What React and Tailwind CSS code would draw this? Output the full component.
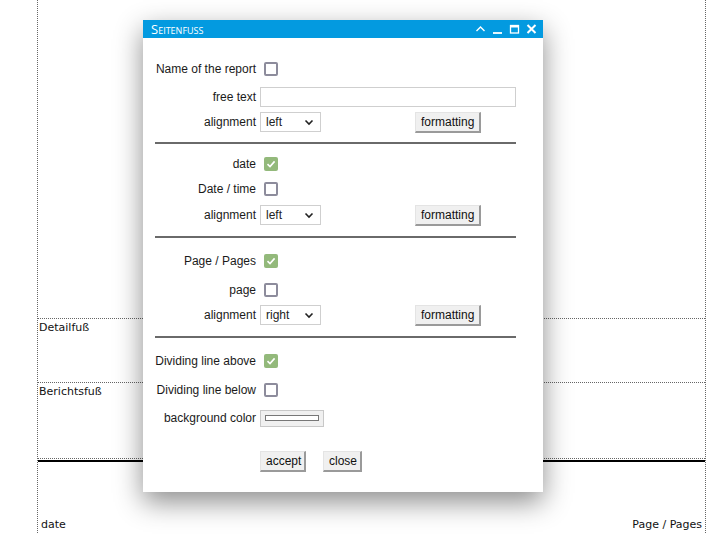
import { useState } from "react";

const font = { fontFamily: '"Liberation Sans", Arial, sans-serif' };

function CheckBox({ checked, onChange }) {
  return (
    <button
      type="button"
      onClick={onChange}
      className={
        "ml-[4px] w-[14px] h-[14px] rounded-[2px] flex items-center justify-center " +
        (checked ? "bg-[#93b97b]" : "bg-white border-2 border-[#8d8c9c]")
      }
    >
      {checked && (
        <svg width="10" height="10" viewBox="0 0 10 10">
          <path d="M1.5 5.2 L4 7.6 L8.6 2.4" fill="none" stroke="white" strokeWidth="1.6" />
        </svg>
      )}
    </button>
  );
}

function Select({ value }) {
  return (
    <div className="w-[61px] h-[20px] border border-[#cfcfcf] bg-white flex items-center justify-between pl-[5px] pr-[6px] text-[12px] text-[#222]">
      <span>{value}</span>
      <svg width="10" height="7" viewBox="0 0 10 7">
        <path d="M1.5 1.5 L5 5 L8.5 1.5" fill="none" stroke="#222" strokeWidth="1.6" />
      </svg>
    </div>
  );
}

function Btn({ children, className = "" }) {
  return (
    <button
      type="button"
      className={
        "h-[21px] bg-[#f0f0f0] border border-t-[#e4e4e4] border-l-[#e4e4e4] border-r-[#9a9a9a] border-b-[#9a9a9a] border-r-2 border-b-2 text-[12px] text-[#111] px-[5px] leading-none " +
        className
      }
    >
      {children}
    </button>
  );
}

function Row({ label, mt, children }) {
  return (
    <div className={"flex items-center h-6 " + mt}>
      <div className="w-[101px] text-right text-[12px] text-[#1a1a1a] whitespace-nowrap">{label}</div>
      <div className="ml-[4px] flex items-center flex-1">{children}</div>
    </div>
  );
}

function Hr({ mt }) {
  return <div className={"h-[2px] bg-[#6a6a6a] w-[361px] " + mt} />;
}

export default function App() {
  const [checks, setChecks] = useState({
    name: false,
    date: true,
    datetime: false,
    pages: true,
    page: false,
    above: true,
    below: false,
  });
  const toggle = (k) => setChecks({ ...checks, [k]: !checks[k] });

  return (
    <div className="relative w-[728px] h-[549px] bg-white overflow-hidden" style={font}>
      {/* report canvas */}
      <div
        className="ml-[37px] w-[669px] h-[533px] border-l border-r border-dotted border-[#666] flex flex-col"
        style={{ fontFamily: '"DejaVu Sans", sans-serif' }}
      >
        <div className="h-[318px]" />
        <div className="h-[64px] border-t border-dotted border-[#666] text-[11px] text-[#111] pl-[1px] pt-[1px]">
          Detailfuß
        </div>
        <div className="h-[76px] border-t border-dotted border-[#666] text-[11px] text-[#111] pl-[1px] pt-[1px]">
          Berichtsfuß
        </div>
        <div className="border-t border-dotted border-[#666] h-[2px]" />
        <div className="flex-1 border-t-2 border-black flex items-end justify-between text-[11px] text-[#111] px-[3px]">
          <span>date</span>
          <span>Page / Pages</span>
        </div>
      </div>

      {/* dialog window */}
      <div className="absolute left-[143px] top-[20px] w-[400px] h-[472px] bg-white shadow-[0_10px_26px_rgba(0,0,0,0.45)]">
        <div className="h-[18px] bg-[#039ae0] flex items-center justify-between pl-[8px] pr-[6px] text-white">
          <span
            className="text-[13px] leading-none"
            style={{ fontVariant: "small-caps", fontFamily: '"Open Sans", sans-serif' }}
          >
            Seitenfuss
          </span>
          <div className="flex items-center gap-[6px]">
            <svg width="11" height="10" viewBox="0 0 11 10">
              <path d="M1.5 7 L5.5 3 L9.5 7" fill="none" stroke="white" strokeWidth="1.4" />
            </svg>
            <svg width="11" height="10" viewBox="0 0 11 10">
              <path d="M1 9 H10" stroke="white" strokeWidth="1.8" />
            </svg>
            <svg width="11" height="10" viewBox="0 0 11 10">
              <rect x="1.5" y="1.5" width="8" height="7.5" fill="none" stroke="white" strokeWidth="1.3" />
              <path d="M1.5 2.5 H9.5" stroke="white" strokeWidth="2" />
            </svg>
            <svg width="11" height="10" viewBox="0 0 11 10">
              <path d="M1.5 1 L9.5 9 M9.5 1 L1.5 9" stroke="white" strokeWidth="2" />
            </svg>
          </div>
        </div>

        <div className="pl-[12px] flex flex-col">
          <Row label="Name of the report" mt="mt-[19px]">
            <CheckBox checked={checks.name} onChange={() => toggle("name")} />
          </Row>
          <Row label="free text" mt="mt-[4px]">
            <input className="w-[256px] h-[20px] border border-[#cfcfcf] outline-none text-[12px] px-1" />
          </Row>
          <Row label="alignment" mt="mt-[1px]">
            <Select value="left" />
            <Btn className="ml-[94px]">formatting</Btn>
          </Row>
          <Hr mt="mt-[8px]" />

          <Row label="date" mt="mt-[8px]">
            <CheckBox checked={checks.date} onChange={() => toggle("date")} />
          </Row>
          <Row label="Date / time" mt="mt-[1px]">
            <CheckBox checked={checks.datetime} onChange={() => toggle("datetime")} />
          </Row>
          <Row label="alignment" mt="mt-[2px]">
            <Select value="left" />
            <Btn className="ml-[94px]">formatting</Btn>
          </Row>
          <Hr mt="mt-[9px]" />

          <Row label="Page / Pages" mt="mt-[11px]">
            <CheckBox checked={checks.pages} onChange={() => toggle("pages")} />
          </Row>
          <Row label="page" mt="mt-[5px]">
            <CheckBox checked={checks.page} onChange={() => toggle("page")} />
          </Row>
          <Row label="alignment" mt="mt-[1px]">
            <Select value="right" />
            <Btn className="ml-[94px]">formatting</Btn>
          </Row>
          <Hr mt="mt-[9px]" />

          <Row label="Dividing line above" mt="mt-[11px]">
            <CheckBox checked={checks.above} onChange={() => toggle("above")} />
          </Row>
          <Row label="Dividing line below" mt="mt-[5px]">
            <CheckBox checked={checks.below} onChange={() => toggle("below")} />
          </Row>
          <Row label="background color" mt="mt-[4px]">
            <button
              type="button"
              className="w-[64px] h-[17px] bg-[#f0f0f0] border border-[#c8c8c8] flex items-center justify-center"
            >
              <span className="block w-[54px] h-[6px] bg-white border border-[#777]" />
            </button>
          </Row>

          <div className="flex mt-[21px] ml-[105px] gap-[17px]">
            <Btn className="w-[46px]">accept</Btn>
            <Btn className="w-[39px]">close</Btn>
          </div>
        </div>
      </div>
    </div>
  );
}
